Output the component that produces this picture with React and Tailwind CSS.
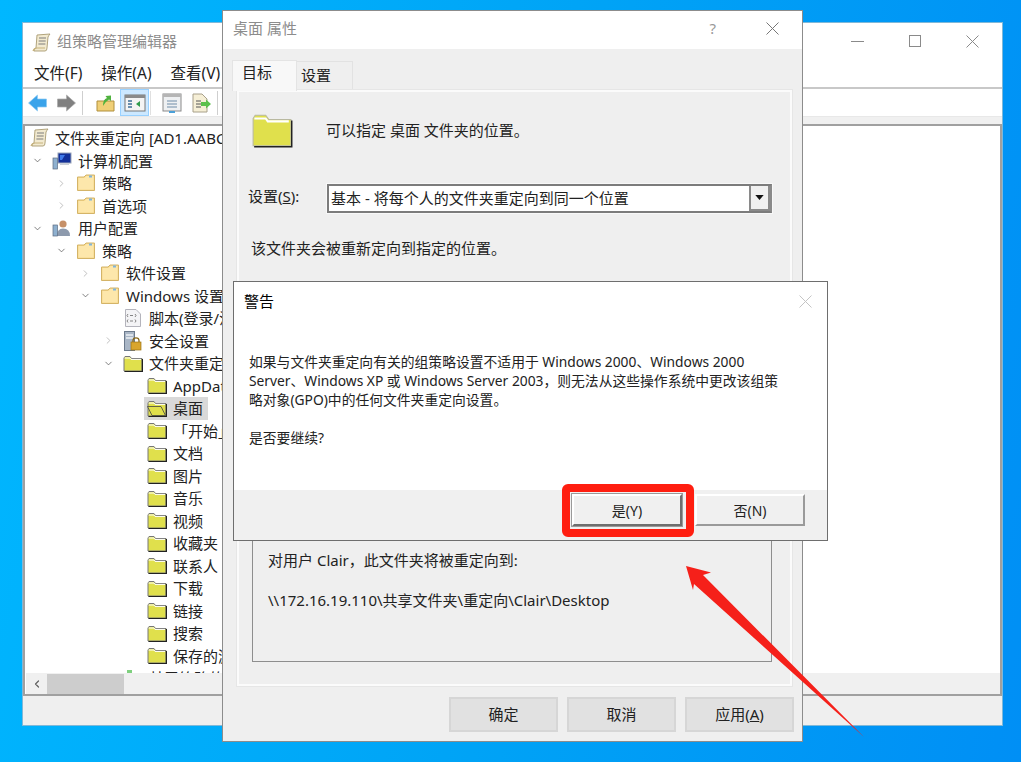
import { ChevronRight, ChevronDown, ChevronLeft } from 'lucide-react';

const font = 'font-["Noto_Sans","Noto_Sans_CJK_SC",sans-serif]';

function CloseGlyph({ className }) {
  return (
    <svg viewBox="0 0 13 13" className={`w-[13px] h-[13px] shrink-0 ${className}`}>
      <path d="M0.5 0.5 L12.5 12.5 M12.5 0.5 L0.5 12.5" stroke="currentColor" strokeWidth="1" fill="none" />
    </svg>
  );
}

// 旧式黄色文件夹
function OldFolder({ open, big }) {
  const size = big ? 'w-[42px] h-[36px]' : 'w-[20px] h-[17px]';
  return (
    <svg viewBox="0 0 20 17" className={size}>
      <path d="M1 3 L2 1.5 L7 1.5 L8.5 3.5 L19 3.5 L19 16 L1 16 Z" fill="#e0e04c" stroke={big ? '#b9b9a0' : '#777'} strokeWidth={big ? 0.5 : 1} />
      <path d="M1.6 3 L7 3 L8 4.4 L18 4.4" fill="none" stroke="#fff" strokeWidth="1" />
      <path d="M19.4 4 L19.4 16.5 L1.5 16.5" fill="none" stroke="#222" strokeWidth={big ? 0.7 : 1.2} />
      {open && <path d="M0.5 6.5 L14 6.5 L18.5 15.5 L5 15.5 Z" fill="#e0e04c" stroke="#444" strokeWidth="0.8" />}
    </svg>
  );
}

// 浅色文件夹
function ManilaFolder() {
  return (
    <svg viewBox="0 0 18 18" className="w-[18px] h-[18px]">
      <path d="M0.5 3 L0.5 16.5 L17.5 16.5 L17.5 1 L9 1 L7 3 Z" fill="#f6d98c" stroke="#d4b468" />
      <path d="M1.5 4 L7.5 4 L9.5 2 L16.5 2 L16.5 15.5 L1.5 15.5 Z" fill="#fde7ab" />
      <rect x="12" y="1.5" width="3" height="2" fill="#7fb4dc" />
    </svg>
  );
}

function ScrollIcon({ className }) {
  return (
    <svg viewBox="0 0 20 20" className={className}>
      <path d="M5 2 L18 1 Q17 2 16 4 L15 15 Q15 18 13 18 L2 18 Q1 16 4 15 Z" fill="#f2ead0" stroke="#a89a70" strokeWidth="0.9" />
      <path d="M7 5 H14 M6.7 8 H13.7 M6.4 11 H13.4" stroke="#7c7c7c" strokeWidth="1" />
      <path d="M1 18 Q2 15 5 15 L13 15" fill="none" stroke="#c6b27c" strokeWidth="1.2" />
    </svg>
  );
}

function ComputerIcon() {
  return (
    <svg viewBox="0 0 20 18" className="w-[20px] h-[18px]">
      <rect x="6" y="1" width="13" height="10" fill="#12309a" stroke="#9aa4b8" />
      <path d="M8 3 L13 3 L10 8 L8 8 Z" fill="#3f79e8" />
      <rect x="8" y="11" width="9" height="2" fill="#c9cfd8" />
      <rect x="1" y="6" width="4.5" height="11" fill="#8eb0cf" stroke="#5c6b80" strokeWidth="0.7" />
    </svg>
  );
}

function UserIcon() {
  return (
    <svg viewBox="0 0 20 18" className="w-[20px] h-[18px]">
      <circle cx="11" cy="5" r="3.6" fill="#c69068" />
      <path d="M5 17 Q5 9.5 11 9.5 Q18 9.5 18 17 Z" fill="#8d9aad" />
      <rect x="1" y="6" width="4.5" height="11" fill="#8eb0cf" stroke="#5c6b80" strokeWidth="0.7" />
    </svg>
  );
}

function ScriptIcon() {
  return (
    <svg viewBox="0 0 18 18" className="w-[18px] h-[18px]">
      <path d="M1.5 0.5 H12 L16.5 5 V17.5 H1.5 Z" fill="#f4f4f6" stroke="#b4b4bc" />
      <path d="M4 5 L3 6.5 L4 8 M6 6.5 H9 M11 5 L12 6.5 L11 8 M4 10.5 L3 12 L4 13.5 M6 12 H9 M11 10.5 L12 12 L11 13.5" fill="none" stroke="#777" strokeWidth="0.9" />
    </svg>
  );
}

function SecurityIcon() {
  return (
    <svg viewBox="0 0 18 20" className="w-[18px] h-[20px]">
      <rect x="0.5" y="0.5" width="10" height="19" fill="#a9b6c6" stroke="#6c7a8c" />
      <path d="M2 4 H9 M2 7 H9" stroke="#edf1f5" strokeWidth="1.4" />
      <path d="M9 11 V9.5 Q9 6.8 12 6.8 Q15 6.8 15 9.5 V11" fill="none" stroke="#8a6a1c" strokeWidth="1.3" />
      <rect x="7" y="11" width="10" height="8" fill="#d9a52c" stroke="#9c7414" strokeWidth="0.7" />
    </svg>
  );
}

const treeRows = [
  { depth: 0, icon: 'scroll', label: '文件夹重定向 [AD1.AABC' },
  { depth: 1, icon: 'computer', label: '计算机配置', arrow: 'down' },
  { depth: 2, icon: 'manila', label: '策略', arrow: 'right' },
  { depth: 2, icon: 'manila', label: '首选项', arrow: 'right' },
  { depth: 1, icon: 'user', label: '用户配置', arrow: 'down' },
  { depth: 2, icon: 'manila', label: '策略', arrow: 'down' },
  { depth: 3, icon: 'manila', label: '软件设置', arrow: 'right' },
  { depth: 3, icon: 'manila', label: 'Windows 设置', arrow: 'down' },
  { depth: 4, icon: 'script', label: '脚本(登录/注销)' },
  { depth: 4, icon: 'security', label: '安全设置', arrow: 'right' },
  { depth: 4, icon: 'old', label: '文件夹重定向', arrow: 'down' },
  { depth: 5, icon: 'old', label: 'AppData' },
  { depth: 5, icon: 'open', label: '桌面', selected: true },
  { depth: 5, icon: 'old', label: '「开始」菜单' },
  { depth: 5, icon: 'old', label: '文档' },
  { depth: 5, icon: 'old', label: '图片' },
  { depth: 5, icon: 'old', label: '音乐' },
  { depth: 5, icon: 'old', label: '视频' },
  { depth: 5, icon: 'old', label: '收藏夹' },
  { depth: 5, icon: 'old', label: '联系人' },
  { depth: 5, icon: 'old', label: '下载' },
  { depth: 5, icon: 'old', label: '链接' },
  { depth: 5, icon: 'old', label: '搜索' },
  { depth: 5, icon: 'old', label: '保存的游戏' },
  { depth: 4, icon: 'policy', label: '基于策略的QoS' },
];

function TreeIcon({ name }) {
  if (name === 'scroll') return <ScrollIcon className="w-[20px] h-[20px]" />;
  if (name === 'computer') return <ComputerIcon />;
  if (name === 'user') return <UserIcon />;
  if (name === 'manila') return <ManilaFolder />;
  if (name === 'script') return <ScriptIcon />;
  if (name === 'security') return <SecurityIcon />;
  if (name === 'old') return <OldFolder />;
  if (name === 'open') return <OldFolder open />;
  return (
    <svg viewBox="0 0 18 18" className="w-[18px] h-[18px]">
      <rect x="3" y="1" width="5" height="16" fill="#7fd07f" />
      <rect x="8" y="4" width="1" height="13" fill="#333" />
      <rect x="9" y="5" width="5" height="12" fill="#f0a070" />
    </svg>
  );
}

const indents = { 0: 'pl-[4px]', 1: 'pl-[3px]', 2: 'pl-[27px]', 3: 'pl-[51px]', 4: 'pl-[74px]', 5: 'pl-[98px]' };

function TreeRow({ row }) {
  return (
    <div className={`flex items-center h-[22.5px] shrink-0 whitespace-nowrap ${indents[row.depth]}`}>
      {row.depth > 0 && (
        <span className="w-[23px] shrink-0 flex pl-[3px]">
          {row.arrow === 'down' && <ChevronDown size={11} strokeWidth={1.6} className="text-[#555]" />}
          {row.arrow === 'right' && <ChevronRight size={11} strokeWidth={1.6} className="text-[#aaa]" />}
        </span>
      )}
      <span className={`flex items-center h-[22.5px] ${row.selected ? 'bg-[#d9d9d9] -ml-[3px] pl-[3px] w-[64px]' : ''} ${row.depth === 0 ? 'gap-[5px]' : 'gap-[6px]'}`}>
        <span className="w-[20px] flex justify-center shrink-0"><TreeIcon name={row.icon} /></span>
        <span className="text-[15px] leading-[22px] text-[#222]">{row.label}</span>
      </span>
    </div>
  );
}

function MainWindow() {
  return (
    <div className="absolute left-[22px] top-[22px] w-[981px] h-[704px] bg-white border border-[#7fb8d8] flex flex-col">
      <div className="h-[39px] shrink-0 flex items-center pl-[9px] gap-[5px]">
        <ScrollIcon className="w-[20px] h-[20px]" />
        <span className="text-[15px] text-[#8c8c8c] pb-[3px]">组策略管理编辑器</span>
        <div className="ml-auto flex items-center gap-[45px] pr-[23px] pb-[3px] text-[#8a8a8a]">
          <span className="w-[13px] h-px bg-[#8a8a8a]" />
          <span className="w-[12px] h-[12px] border border-[#8a8a8a]" />
          <CloseGlyph />
        </div>
      </div>
      <div className="h-[27px] shrink-0 flex items-center pl-[11px] pb-[2px] gap-[19px] text-[15.5px] text-[#222] border-b-2 border-[#c8c8c8]">
        <span>文件(F)</span>
        <span>操作(A)</span>
        <span>查看(V)</span>
      </div>
      <div className="h-[28px] shrink-0 flex items-center pl-[4px] border-b border-[#e8e8e8]">
        <svg viewBox="0 0 20 18" className="w-[21px] h-[18px]">
          <path d="M1 9 L10 1 V5 H19 V13 H10 V17 Z" fill="#3aa3ea" stroke="#8cc9f2" strokeWidth="0.7" />
        </svg>
        <svg viewBox="0 0 20 18" className="w-[21px] h-[18px] ml-[8px]">
          <path d="M19 9 L10 1 V5 H1 V13 H10 V17 Z" fill="#808080" stroke="#aaa" strokeWidth="0.7" />
        </svg>
        <span className="w-px h-[24px] bg-[#cfcfcf] ml-[5px]" />
        <svg viewBox="0 0 20 18" className="w-[20px] h-[18px] ml-[13px]">
          <path d="M1 7 H18 V17 H1 Z" fill="#f0cf76" stroke="#b08f3c" />
          <path d="M7 12 Q7 5 11 4 L9.5 2 L15 1.5 L15 7 L13 5.5 Q10 7 7 12 Z" fill="#4fb23f" />
        </svg>
        <span className="ml-[4px] w-[29px] h-[27px] bg-[#cce8ff] border border-[#99d1ff] flex items-center justify-center">
          <svg viewBox="0 0 22 18" className="w-[22px] h-[18px]">
            <rect x="1" y="1" width="20" height="16" fill="#f4f4f4" stroke="#777" />
            <rect x="1" y="1" width="20" height="3" fill="#8a8a8a" />
            <path d="M4 7 H8 M4 10 H8 M4 13 H8" stroke="#3c6e96" strokeWidth="1.5" />
            <path d="M16 7 L12 10 L16 13 Z" fill="#2f9a4c" />
          </svg>
        </span>
        <span className="w-px h-[24px] bg-[#e0e0e0] ml-[1px]" />
        <svg viewBox="0 0 20 20" className="w-[20px] h-[20px] ml-[11px]">
          <rect x="1" y="1" width="18" height="17" fill="#eef0f2" stroke="#8a8a8a" />
          <rect x="1" y="1" width="18" height="3" fill="#b5b5b5" />
          <path d="M5 8 H15 M5 11 H15 M5 14 H15" stroke="#6e8ca8" />
          <rect x="7" y="18" width="6" height="2" fill="#4aa0d8" />
        </svg>
        <svg viewBox="0 0 20 20" className="w-[20px] h-[20px] ml-[9px]">
          <path d="M2 1 H11 L16 6 V19 H2 Z" fill="#f6efd6" stroke="#a8a08a" />
          <path d="M5 8 H10 M5 11 H10 M5 14 H10" stroke="#555" />
          <path d="M10 9 H15 V6.5 L20 11 L15 15.5 V13 H10 Z" fill="#5cc04c" />
        </svg>
        <span className="w-px h-[24px] bg-[#cfcfcf] ml-[6px]" />
      </div>
      <div className="h-[7px] shrink-0 bg-[#f0f0f0]" />
      <div className="flex-1 min-h-0 flex bg-[#efefef] flex-col">
        <div className="h-[572px] shrink-0 border-2 border-[#a0a0a0] bg-white flex flex-col overflow-hidden">
          <div className="flex-1 min-h-0 overflow-hidden flex flex-col pt-[1px] pl-[1px]">
            {treeRows.map((row, i) => <TreeRow key={i} row={row} />)}
          </div>
          <div className="h-[21px] shrink-0 bg-[#f0f0f0] flex items-center ml-[1px]">
            <span className="w-[21px] flex justify-center"><ChevronLeft size={12} strokeWidth={2.4} className="text-[#606060]" /></span>
            <span className="w-[77px] h-[20px] bg-[#cdcdcd]" />
          </div>
        </div>
      </div>
    </div>
  );
}

function BottomButton({ children }) {
  return (
    <div className="w-[109px] h-[35px] bg-[#e1e1e1] border-2 border-[#d6d6d6] flex items-center justify-center text-[15px] text-[#222]">
      {children}
    </div>
  );
}

function PropertiesDialog() {
  return (
    <div className="absolute left-[222px] top-[10px] w-[581px] h-[732px] bg-[#efefef] border border-[#8c8c8c] flex flex-col">
      <div className="h-[38px] shrink-0 bg-white flex items-center pl-[10px] pr-[23px]">
        <span className="text-[15px] text-[#8c8c8c] pb-[3px]">桌面 属性</span>
        <span className="ml-auto text-[15px] text-[#999] pb-[3px]">?</span>
        <CloseGlyph className="ml-[50px] mb-[3px] text-[#777]" />
      </div>
      <div className="flex-1 min-h-0 flex flex-col pl-[14px] pr-[10px] pt-[11px]">
        <div className="flex h-[30px] shrink-0 -ml-[5px] items-end">
          <div className="w-[65px] h-[31px] bg-[#f8f8f8] border-t border-l border-r border-[#e4e4e4] pl-[9px] text-[15px] text-[#222] -mb-[1px] z-10">目标</div>
          <div className="w-[56px] h-[29px] bg-[#efefef] border-t border-r border-[#e2e2e2] pl-[4px] pt-[2px] text-[15px] text-[#222]">设置</div>
        </div>
        <div className="w-[555px] h-[596px] shrink-0 border-2 border-[#fbfbfb] outline outline-[#e6e6e6] flex flex-col pl-[12px] pr-[18px]">
          <div className="flex items-center h-[36px] mt-[20px] gap-[33px]">
            <OldFolder big />
            <span className="text-[15px] text-[#222]">可以指定 桌面 文件夹的位置。</span>
          </div>
          <div className="flex items-center h-[29px] mt-[36px]">
            <span className="w-[78px] -ml-[3px] pb-[4px] text-[15px] text-[#222]">设置(<span className="underline">S</span>):</span>
            <div className="w-[445px] h-[29px] bg-white border-2 border-[#7c7c7c] border-r-[#8a8a8a] flex items-center pl-[2px] outline outline-[#f8f8f8] ml-px">
              <span className="text-[15px] text-[#222]">基本 - 将每个人的文件夹重定向到同一个位置</span>
              <span className="ml-auto w-[21px] h-[25px] bg-[#f0f0f0] border-r-2 border-b-2 border-l-2 border-[#8a8a8a] flex items-center justify-center">
                <svg viewBox="0 0 10 6" className="w-[9px] h-[5px]"><path d="M0 0 H10 L5 6 Z" fill="#111" /></svg>
              </span>
            </div>
          </div>
          <p className="mt-[24px] text-[15px] leading-[22px] text-[#222]">该文件夹会被重新定向到指定的位置。</p>
          <div className="mt-[242px] ml-px h-[161px] border border-[#8e8e8e] flex flex-col pl-[15px]">
            <p className="mt-[47px] text-[15px] leading-[22px] text-[#222]">对用户 Clair，此文件夹将被重定向到:</p>
            <p className="mt-[18px] text-[15px] leading-[22px] text-[#222]">\\172.16.19.110\共享文件夹\重定向\Clair\Desktop</p>
          </div>
        </div>
        <div className="flex justify-end gap-[9px] mt-[11px] -mr-[2px]">
          <BottomButton>确定</BottomButton>
          <BottomButton>取消</BottomButton>
          <BottomButton>应用(<span className="underline">A</span>)</BottomButton>
        </div>
      </div>
    </div>
  );
}

function WarningDialog() {
  return (
    <div className="absolute left-[233px] top-[281px] w-[595px] h-[260px] bg-white border border-[#6e6e6e] flex flex-col">
      <div className="h-[38px] shrink-0 flex items-center pl-[10px] pr-[15px]">
        <span className="text-[15px] text-black">警告</span>
        <CloseGlyph className="ml-auto text-[#c4c4c4]" />
      </div>
      <div className="flex-1 pl-[15px] pt-[32px] text-[13.8px] leading-[19px] text-[#222] whitespace-nowrap">
        <p>如果与文件夹重定向有关的组策略设置不适用于 Windows 2000、Windows 2000</p>
        <p>Server、Windows XP 或 Windows Server 2003，则无法从这些操作系统中更改该组策</p>
        <p>略对象(GPO)中的任何文件夹重定向设置。</p>
        <p className="mt-[19px]">是否要继续?</p>
      </div>
      <div className="h-[50px] shrink-0 bg-[#f0f0f0] flex justify-end items-start pt-[4px] pr-[22px] gap-[13px]">
        <div className="w-[110px] h-[32px] bg-[#f0f0f0] border-2 border-t-white border-l-white border-r-[#6e6e6e] border-b-[#6e6e6e] outline outline-[#9a9a9a] flex items-center justify-center text-[14px] text-[#222]">是(Y)</div>
        <div className="w-[110px] h-[32px] bg-[#f0f0f0] border-2 border-t-white border-l-white border-r-[#9a9a9a] border-b-[#9a9a9a] flex items-center justify-center text-[14px] text-[#222]">否(N)</div>
      </div>
    </div>
  );
}

export default function App() {
  return (
    <div className={`relative w-[1021px] h-[762px] overflow-hidden bg-[linear-gradient(100deg,#00b7ff_0%,#00a4f6_50%,#008ff5_100%)] ${font}`}>
      <MainWindow />
      <PropertiesDialog />
      <WarningDialog />
      {/* 红色标注框和箭头 */}
      <div className="absolute left-[562px] top-[484px] w-[132px] h-[53px] border-[8px] border-[#ff1e10] rounded-[6px]" />
      <svg className="absolute left-0 top-0 w-[1021px] h-[762px] pointer-events-none" viewBox="0 0 1021 762">
        <polygon points="686,566 711,572.5 703,575 864,737 694,584 693,590" fill="#f5201a" />
      </svg>
    </div>
  );
}
